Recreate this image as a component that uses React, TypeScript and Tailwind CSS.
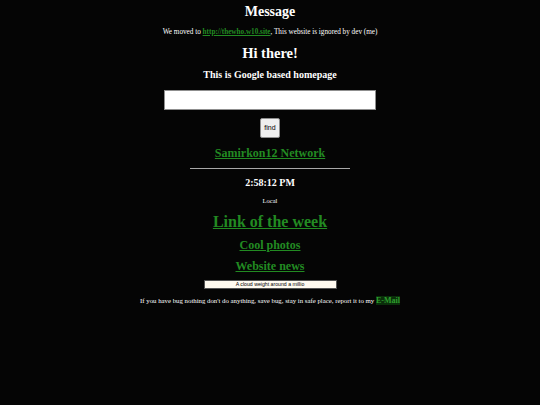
export default function App() {
  const link = "text-[#228b22] underline font-bold"

  return (
    <div className="min-h-[405px] w-full bg-[#050505] text-white font-['Liberation_Serif',serif] flex flex-col items-center pt-[1px]">
      <h1 className="h-[22px] leading-[22px] text-[14px] font-bold">Message</h1>
      <p className="mt-[3px] h-[12px] leading-[12px] text-[7.2px]">
        We moved to <a className={link} href="#">http://thewho.w10.site</a>, This website is ignored by dev (me)
      </p>
      <h2 className="mt-[4px] h-[22px] leading-[22px] text-[14.5px] font-bold">Hi there!</h2>
      <h3 className="mt-[4px] h-[14px] leading-[14px] text-[10px] font-bold">This is Google based homepage</h3>

      <input
        type="text"
        className="mt-[8px] h-[20px] w-[212px] bg-white border border-[#8f8f8f] outline-none"
      />
      <button className="mt-[8px] h-[20px] w-[20px] bg-[#efefef] border border-[#8f8f8f] rounded-[2px] text-black text-[7px] font-['Liberation_Sans',sans-serif] flex items-center justify-center">
        find
      </button>

      <a href="#" className={`${link} mt-[7px] h-[16px] leading-[16px] text-[12px]`}>
        Samirkon12 Network
      </a>
      <hr className="mt-[7px] w-[160px] border-0 h-[1px] bg-[#a8a8a8]" />

      <div className="mt-[7px] h-[14px] leading-[14px] text-[10px] font-bold">2:58:12 PM</div>
      <div className="mt-[6px] h-[10px] leading-[10px] text-[6.5px]">Local</div>

      <a href="#" className={`${link} mt-[6px] h-[20px] leading-[20px] text-[16px]`}>
        Link of the week
      </a>
      <a href="#" className={`${link} mt-[5px] h-[16px] leading-[16px] text-[12px]`}>
        Cool photos
      </a>
      <a href="#" className={`${link} mt-[5px] h-[16px] leading-[16px] text-[12px]`}>
        Website news
      </a>

      <div className="mt-[6px] h-[9px] w-[133px] bg-[#fffaf0] border border-[#555] overflow-hidden flex items-center justify-center">
        <span className="text-black text-[5.2px] leading-[7px] font-['Liberation_Sans',sans-serif] whitespace-nowrap">
          A cloud weight around a millio
        </span>
      </div>

      <p className="mt-[7px] h-[10px] leading-[10px] text-[6.8px] whitespace-nowrap">
        If you have bug nothing don't do anything, save bug, stay in safe place, report it to my{" "}
        <a href="#" className="text-[#2e9e2e] bg-[#0a2e0a] font-bold text-[8px]">E-Mail</a>
      </p>
    </div>
  )
}
